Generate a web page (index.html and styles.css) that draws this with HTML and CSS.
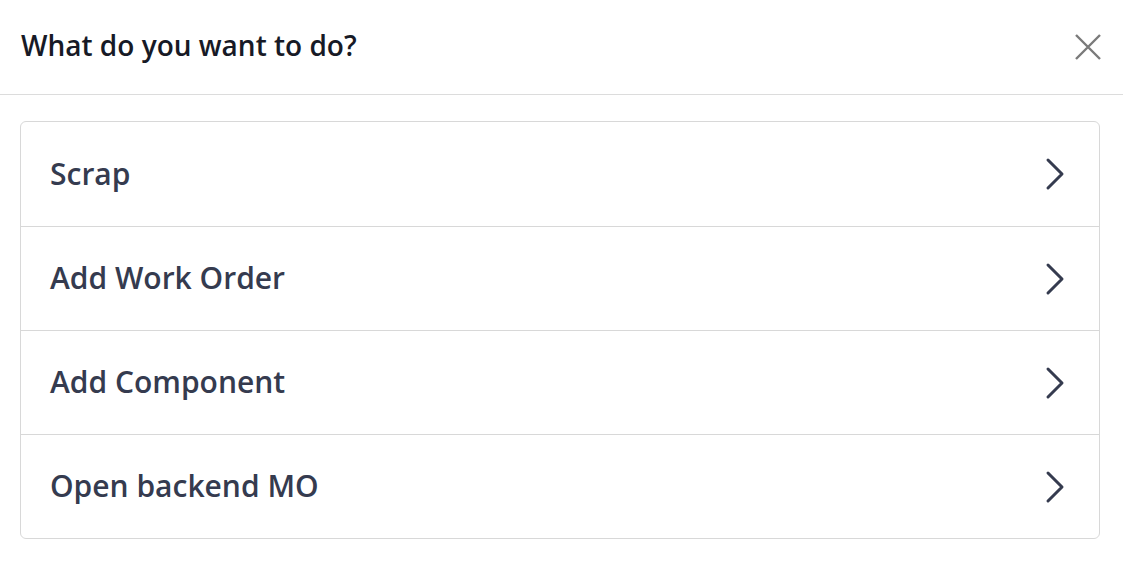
FILE: index.html
```html
<!DOCTYPE html>
<html lang="en">
<head>
    <meta charset="UTF-8">
    <meta name="viewport" content="width=device-width, initial-scale=1.0">
    <title>What do you want to do?</title>
    <link rel="stylesheet" href="styles.css">
</head>
<body>
    <div class="dialog">
        <header class="dialog-header">
            <h1>What do you want to do?</h1>
            <button class="close" aria-label="Close">
                <svg width="28" height="28" viewBox="0 0 28 28"><path d="M2 2L26 26M26 2L2 26" stroke="#7a7a7a" stroke-width="2.4" fill="none"/></svg>
            </button>
        </header>
        <div class="dialog-body">
            <ul class="actions">
                <li class="action"><span>Scrap</span><svg class="chev" width="20" height="34" viewBox="0 0 20 34"><path d="M3 3L17 17L3 31" stroke="#353b4f" stroke-width="3" fill="none" stroke-linecap="round" stroke-linejoin="round"/></svg></li>
                <li class="action"><span>Add Work Order</span><svg class="chev" width="20" height="34" viewBox="0 0 20 34"><path d="M3 3L17 17L3 31" stroke="#353b4f" stroke-width="3" fill="none" stroke-linecap="round" stroke-linejoin="round"/></svg></li>
                <li class="action"><span>Add Component</span><svg class="chev" width="20" height="34" viewBox="0 0 20 34"><path d="M3 3L17 17L3 31" stroke="#353b4f" stroke-width="3" fill="none" stroke-linecap="round" stroke-linejoin="round"/></svg></li>
                <li class="action"><span>Open backend MO</span><svg class="chev" width="20" height="34" viewBox="0 0 20 34"><path d="M3 3L17 17L3 31" stroke="#353b4f" stroke-width="3" fill="none" stroke-linecap="round" stroke-linejoin="round"/></svg></li>
            </ul>
        </div>
    </div>
</body>
</html>
```

FILE: styles.css
```css
body { margin: 0; font-family: "Open Sans", "Noto Sans", sans-serif; background: #fff; }
.dialog { width: 1123px; }
.dialog-header { height: 95px; border-bottom: 1px solid #dcdcdc; display: flex; align-items: center; justify-content: space-between; padding: 0 21px 0 21px; box-sizing: border-box; }
.dialog-header h1 { margin: 0; font-size: 28px; font-weight: 600; color: #171a26; padding-bottom: 4px; }
.close { background: none; border: none; padding: 0; cursor: pointer; display: flex; }
.dialog-body { padding: 26px 23px 0 20px; }
.actions { list-style: none; margin: 0; padding: 0; border: 1px solid #d8d8d8; border-radius: 6px; }
.action { height: 103px; display: flex; align-items: center; justify-content: space-between; padding: 0 34px 0 29px; border-top: 1px solid #d8d8d8; font-size: 30px; font-weight: 600; color: #353b4f; }
.action:first-child { border-top: none; height: 104px; }
.action span { padding-bottom: 2px; }
```
